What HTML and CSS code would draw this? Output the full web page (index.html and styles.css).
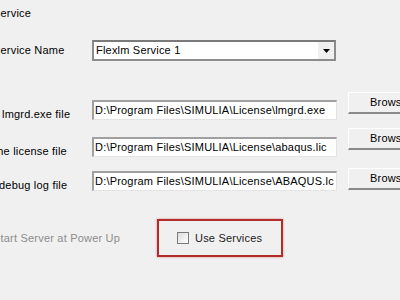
FILE: index.html
```html
<!DOCTYPE html>
<html>
<head>
<meta charset="utf-8">
<link rel="stylesheet" href="styles.css">
</head>
<body>
<div class="page">
  <div class="title">Service</div>
  <div class="row row-combo">
    <div class="label lbl-name">Service Name</div>
    <div class="combo">
      <span class="combo-text">Flexlm Service 1</span>
      <span class="combo-btn"><svg width="7" height="4" viewBox="0 0 7 4"><path d="M0 0H7L3.5 4Z" fill="#000"/></svg></span>
    </div>
  </div>
  <div class="row row-a">
    <div class="label lbl-a">lmgrd.exe file</div>
    <div class="field">D:\Program Files\SIMULIA\License\lmgrd.exe</div>
    <div class="btn">Browse...</div>
  </div>
  <div class="row row-b">
    <div class="label lbl-b">the license file</div>
    <div class="field">D:\Program Files\SIMULIA\License\abaqus.lic</div>
    <div class="btn">Browse...</div>
  </div>
  <div class="row row-c">
    <div class="label lbl-c">debug log file</div>
    <div class="field">D:\Program Files\SIMULIA\License\ABAQUS.lc</div>
    <div class="btn">Browse...</div>
  </div>
  <div class="row row-d">
    <div class="label lbl-d">Start Server at Power Up</div>
    <div class="redbox">
      <span class="check"></span>
      <span class="check-text">Use Services</span>
    </div>
  </div>
</div>
</body>
</html>
```
FILE: styles.css
```css
html, body {
  margin: 0;
  padding: 0;
  background: #f0f0f0;
  overflow: hidden;
  width: 400px;
  height: 300px;
}
.page {
  margin-left: -7px;
  width: 440px;
  font-family: "Liberation Sans", Arial, sans-serif;
  font-size: 11px;
  letter-spacing: 0.2px;
  color: #000;
}
.title {
  height: 40px;
  padding-top: 7px;
  box-sizing: border-box;
  line-height: 12px;
}
.row {
  display: grid;
  grid-template-columns: 88px 245px 80px;
  column-gap: 11px;
  align-items: start;
}
.label {
  white-space: nowrap;
  line-height: 12px;
}
.lbl-a { padding-left: 9px; }
.lbl-b { padding-left: 1px; }
.lbl-c { padding-left: 6px; }
.row-combo {
  height: 52px;
}
.lbl-name {
  margin-top: 4px;
}
.combo {
  height: 21px;
  box-sizing: border-box;
  border: 2px solid #8c8c8c;
  border-top-color: #7a7a7a;
  background: #fff;
  display: flex;
  align-items: center;
  width: 244px;
}
.combo-text {
  flex: 1;
  padding-left: 2px;
  line-height: 15px;
}
.combo-btn {
  width: 17px;
  height: 17px;
  box-sizing: border-box;
  background: #f0f0f0;
  border-left: 1px solid #ffffff;
  display: flex;
  align-items: center;
  justify-content: center;
}
.field {
  height: 20px;
  box-sizing: border-box;
  background: #fff;
  border-top: 2px solid #a0a0a0;
  border-left: 2px solid #a0a0a0;
  border-right: 1px solid #e3e3e3;
  border-bottom: 1px solid #e3e3e3;
  padding-left: 1px;
  line-height: 16px;
  white-space: nowrap;
  overflow: hidden;
}
.btn {
  height: 22px;
  box-sizing: border-box;
  background: #f0f0f0;
  border-top: 1px solid #ffffff;
  border-left: 1px solid #ffffff;
  border-bottom: 2px solid #8a8a8a;
  border-right: 2px solid #8a8a8a;
  padding-left: 21px;
  line-height: 18px;
  white-space: nowrap;
  overflow: hidden;
}
.row-a { height: 35px; }
.row-a .field { margin-top: 8px; }
.row-a .label { margin-top: 16px; }

.row-b { height: 41px; }
.row-b .field { margin-top: 10px; }
.row-b .label { margin-top: 18px; }
.row-b .btn { margin-top: 1px; }

.row-c { height: 51px; }
.row-c .field { margin-top: 3px; }
.row-c .label { margin-top: 11px; }

.lbl-d {
  color: #8d8d8d;
  margin-top: 13px;
}
.redbox {
  grid-column: 2 / 4;
  margin-left: 65px;
  width: 126px;
  height: 38px;
  box-sizing: border-box;
  border: 2px solid #b32b2b;
  box-shadow: 0 0 2px rgba(200, 60, 60, 0.6);
  display: flex;
  align-items: center;
  padding-left: 18px;
}
.check {
  width: 12px;
  height: 12px;
  box-sizing: border-box;
  border: 1px solid #7a7a7a;
  background: linear-gradient(135deg, #dcdcdc, #ffffff);
  margin-right: 6px;
}
.check-text {
  line-height: 12px;
  color: #222;
}
```
